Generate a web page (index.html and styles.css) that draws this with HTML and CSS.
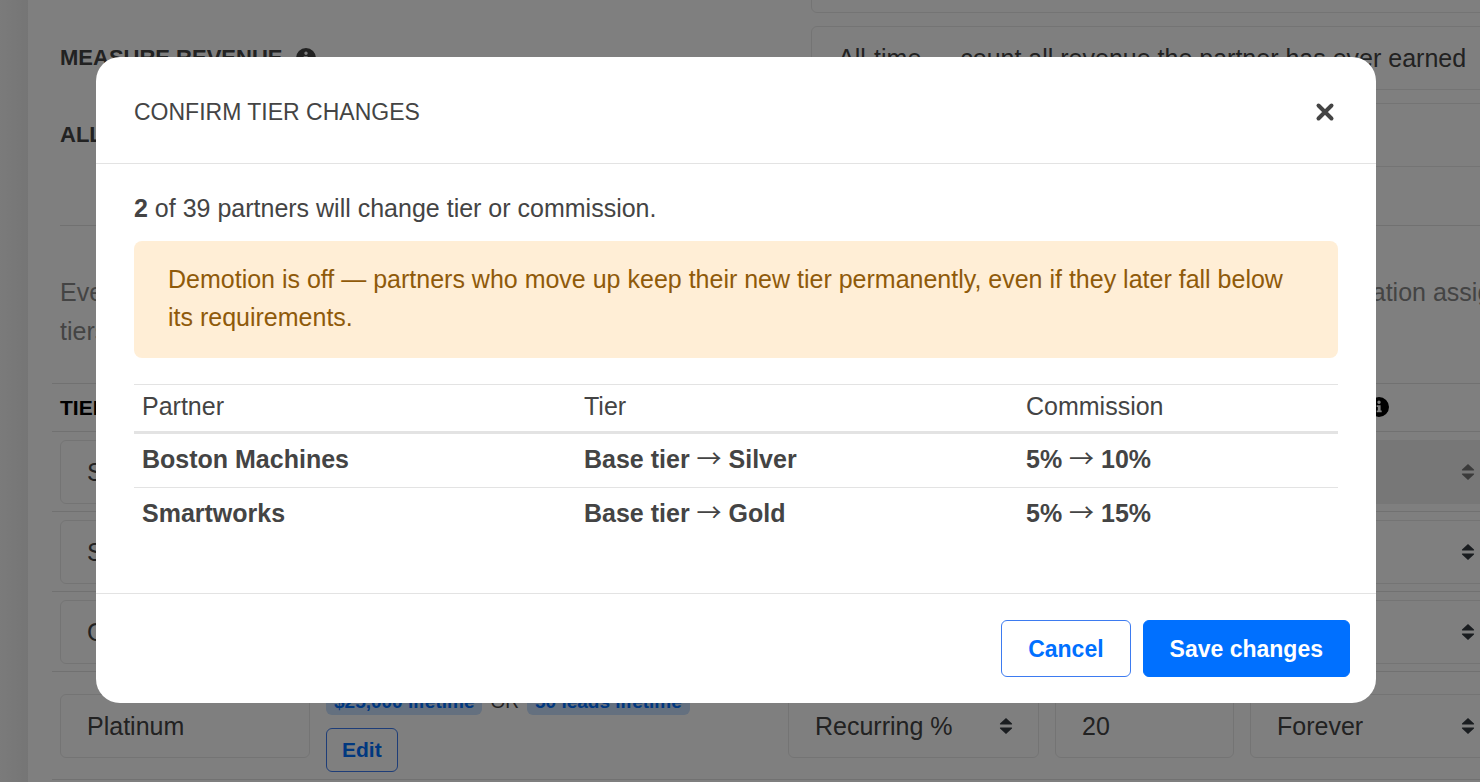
FILE: index.html
```
<!DOCTYPE html>
<html lang="en">
<head>
    <meta charset="UTF-8">
    <meta name="viewport" content="width=device-width, initial-scale=1.0">
    <title>Partner tiers</title>
    <link rel="stylesheet" href="styles.css">
</head>
<body>

<svg class="sprite" aria-hidden="true">
    <symbol id="sort" viewBox="0 0 14 16">
        <path d="M7 0 L13 5.500 Q13.500 6.500 12.500 6.500 H1.500 Q0.500 6.500 1 5.500 Z M7 16 L13 10.500 Q13.500 9.500 12.500 9.500 H1.500 Q0.500 9.500 1 10.500 Z"/>
    </symbol>
    <symbol id="info" viewBox="0 0 20 20">
        <path fill-rule="evenodd" d="M10 0a10 10 0 1 0 0 20a10 10 0 1 0 0-20z M10 3.500a1.700 1.700 0 1 1 0 3.400a1.700 1.700 0 1 1 0-3.400z M7.700 8.200h3.900v5.200h1.100v1.800H7.700v-1.800h1.100v-3.400H7.700z"/>
    </symbol>
</svg>

<div class="page">
    <main class="card">
        <form class="settings">
            <span></span>
            <div class="select"><select aria-label="Based on"><option></option></select></div>

            <label for="measure">Measure revenue <svg class="info"><use href="#info"/></svg></label>
            <div class="select"><select id="measure"><option>All-time — count all revenue the partner has ever earned</option></select></div>

            <label for="demotion">Allow demotion</label>
            <div class="select"><select id="demotion"><option>No</option></select></div>
        </form>

        <p class="help">Every new partner starts in their base tier and moves up a tier when the requirements below are met, the nightly automation assigns<br>tiers to partners.</p>

        <table class="tiers">
            <colgroup>
                <col class="col-tier">
                <col class="col-rules">
                <col class="col-type">
                <col class="col-amount">
                <col>
            </colgroup>
            <thead>
                <tr>
                    <th>Tier</th>
                    <th>Requirements</th>
                    <th>Reward</th>
                    <th>Amount</th>
                    <th>Duration <svg class="info"><use href="#info"/></svg></th>
                </tr>
            </thead>
            <tbody>
                <tr>
                    <td><input type="text" aria-label="Tier name" value="Standard"></td>
                    <td></td>
                    <td><div class="select"><select aria-label="Commission type"><option>Recurring %</option></select></div></td>
                    <td><input type="text" aria-label="Amount" value="5"></td>
                    <td><div class="select"><select aria-label="Duration" disabled><option>Forever</option></select><svg><use href="#sort"/></svg></div></td>
                </tr>
                <tr>
                    <td><input type="text" aria-label="Tier name" value="Silver"></td>
                    <td></td>
                    <td><div class="select"><select aria-label="Commission type"><option>Recurring %</option></select></div></td>
                    <td><input type="text" aria-label="Amount" value="10"></td>
                    <td><div class="select"><select aria-label="Duration"><option>Forever</option></select><svg><use href="#sort"/></svg></div></td>
                </tr>
                <tr>
                    <td><input type="text" aria-label="Tier name" value="Gold"></td>
                    <td></td>
                    <td><div class="select"><select aria-label="Commission type"><option>Recurring %</option></select></div></td>
                    <td><input type="text" aria-label="Amount" value="15"></td>
                    <td><div class="select"><select aria-label="Duration"><option>Forever</option></select><svg><use href="#sort"/></svg></div></td>
                </tr>
                <tr>
                    <td><input type="text" aria-label="Tier name" value="Platinum"></td>
                    <td>
                        <div class="rules">
                            <span class="badge">$25,000 lifetime</span>
                            <span class="or">OR</span>
                            <span class="badge">50 leads lifetime</span>
                        </div>
                        <button type="button" class="btn btn-small">Edit</button>
                    </td>
                    <td><div class="select"><select aria-label="Commission type"><option>Recurring %</option></select><svg><use href="#sort"/></svg></div></td>
                    <td><input type="text" aria-label="Amount" value="20"></td>
                    <td><div class="select"><select aria-label="Duration"><option>Forever</option></select><svg><use href="#sort"/></svg></div></td>
                </tr>
                <tr><td colspan="5"></td></tr>
            </tbody>
        </table>
    </main>
</div>

<div class="backdrop">
    <div class="modal" role="dialog" aria-modal="true" aria-labelledby="modalTitle">
        <div class="modal-header">
            <h2 id="modalTitle">Confirm tier changes</h2>
            <button type="button" class="close" aria-label="Close">
                <svg viewBox="0 0 26 26"><path d="M6.500 6.500 L19.500 19.500 M19.500 6.500 L6.500 19.500"/></svg>
            </button>
        </div>
        <div class="modal-body">
            <p><strong>2</strong> of 39 partners will change tier or commission.</p>
            <div class="alert">Demotion is off — partners who move up keep their new tier permanently, even if they later fall below its requirements.</div>
            <table class="changes">
                <thead>
                    <tr>
                        <th>Partner</th>
                        <th>Tier</th>
                        <th>Commission</th>
                    </tr>
                </thead>
                <tbody>
                    <tr>
                        <td>Boston Machines</td>
                        <td>Base tier <span class="arrow">→</span> Silver</td>
                        <td>5% <span class="arrow">→</span> 10%</td>
                    </tr>
                    <tr>
                        <td>Smartworks</td>
                        <td>Base tier <span class="arrow">→</span> Gold</td>
                        <td>5% <span class="arrow">→</span> 15%</td>
                    </tr>
                </tbody>
            </table>
        </div>
        <div class="modal-footer">
            <button type="button" class="btn">Cancel</button>
            <button type="button" class="btn btn-primary">Save changes</button>
        </div>
    </div>
</div>

</body>
</html>
```
FILE: styles.css
```
* {
    box-sizing: border-box;
}
body {
    margin: 0;
    height: 100vh;
    overflow: hidden;
    font-family: "Liberation Sans", Arial, sans-serif;
    font-size: 25px;
    line-height: 38px;
    color: #444;
}
p, h2 {
    margin: 0;
}
button, input, select {
    font: inherit;
    color: inherit;
}
.sprite {
    display: none;
}

/* page behind the dialog */
.page {
    height: 100vh;
    overflow: hidden;
    padding-left: 28px;
    background: linear-gradient(to right, #f6f6f6, #ebebeb 28px);
}
.card {
    margin: -51px -29px 0 0; /* page is scrolled down a little */
    padding: 0 0 0 24px;
    background: #fff;
}
.settings {
    display: grid;
    grid-template-columns: 751px 1fr;
    row-gap: 13px;
    align-items: center;
    margin: 0 8px;
    padding-bottom: 58px;
    border-bottom: 1px solid #e3e3e3;
}
.settings label {
    display: flex;
    align-items: center;
    gap: 14px;
    font-size: 22px;
    font-weight: bold;
    text-transform: uppercase;
}
.info {
    width: 20px;
    height: 20px;
    fill: currentColor;
}
input, select {
    display: block;
    width: 100%;
    height: 64px;
    padding: 0 26px;
    border: 1px solid #e9e9e9;
    border-radius: 6px;
    background: #fff;
    appearance: none;
}
select:disabled {
    background: #eee;
    border-color: #eee;
    opacity: 1;
}
.select {
    position: relative;
}
.select svg {
    position: absolute;
    top: 24px;
    right: 26px;
    width: 14px;
    height: 16px;
    fill: #343a40;
}
.select select:disabled + svg {
    fill: #777;
}
.help {
    padding: 47px 8px 32px;
    line-height: 39px;
    color: #888;
    white-space: nowrap;
}
.tiers {
    width: 100%;
    table-layout: fixed;
    border-collapse: collapse;
}
.tiers th {
    height: 48px;
    padding: 0 8px;
    border-top: 1px solid #e3e3e3;
    font-size: 21px;
    text-align: left;
    text-transform: uppercase;
    color: #000;
}
.tiers th .info {
    margin: -4px 0 0 4px;
    vertical-align: middle;
}
.tiers td {
    padding: 8px 8px 7px;
    border-top: 1px solid #e3e3e3;
}
.col-tier {
    width: 266px;
}
.col-rules {
    width: 462px;
}
.col-type {
    width: 267px;
}
.col-amount {
    width: 195px;
}
.rules {
    display: flex;
    align-items: center;
    gap: 8px;
    padding-top: 9px;
    margin-bottom: 13px;
    font-size: 19px;
    line-height: 26px;
}
.badge {
    padding: 0 8px;
    border-radius: 6px;
    background: #c8e0ff;
    color: #0070ff;
    font-weight: bold;
}

/* dialog */
.backdrop {
    position: fixed;
    inset: 0;
    padding: 57px 104px 0 96px;
    background: rgba(0, 0, 0, 0.5);
}
.modal {
    border-radius: 24px;
    background: #fff;
}
.modal-header {
    display: flex;
    align-items: center;
    justify-content: space-between;
    padding: 36px 38px 32px;
    border-bottom: 1px solid #e3e3e3;
}
.modal-header h2 {
    font-size: 23px;
    font-weight: normal;
    text-transform: uppercase;
}
.close {
    display: flex;
    padding: 0;
    border: 0;
    background: none;
}
.close svg {
    width: 26px;
    height: 26px;
    stroke: #444;
    stroke-width: 4;
    stroke-linecap: round;
    fill: none;
}
.modal-body {
    padding: 25px 38px 52px;
}
.alert {
    margin: 14px 0 26px;
    padding: 19px 34px 22px;
    border-radius: 8px;
    background: #ffeed6;
    color: #8f5a0a;
}
.changes {
    width: 100%;
    table-layout: fixed;
    border-collapse: collapse;
}
.changes th,
.changes td {
    padding: 6px 8px 9px;
    border-top: 1px solid #e3e3e3;
    text-align: left;
}
.changes th {
    padding: 2px 8px 6px;
    border-bottom: 3px solid #e3e3e3;
    font-weight: normal;
}
.changes td {
    font-weight: bold;
}
.changes th:nth-child(-n+2) {
    width: 442px;
}
.arrow {
    font-family: "Noto Sans CJK JP", sans-serif;
    font-weight: normal;
    line-height: 1;
}
.modal-footer {
    display: flex;
    justify-content: flex-end;
    gap: 12px;
    padding: 26px;
    border-top: 1px solid #e3e3e3;
}
.btn {
    height: 57px;
    padding: 0 26px;
    border: 1px solid #3d7bf0;
    border-radius: 6px;
    background: none;
    color: #0070ff;
    font-size: 23px;
    font-weight: bold;
}
.btn-primary {
    border-color: #0070ff;
    background: #0070ff;
    color: #fff;
}
.btn-small {
    display: block;
    height: 44px;
    padding: 0 15px;
    font-size: 21px;
}
```
